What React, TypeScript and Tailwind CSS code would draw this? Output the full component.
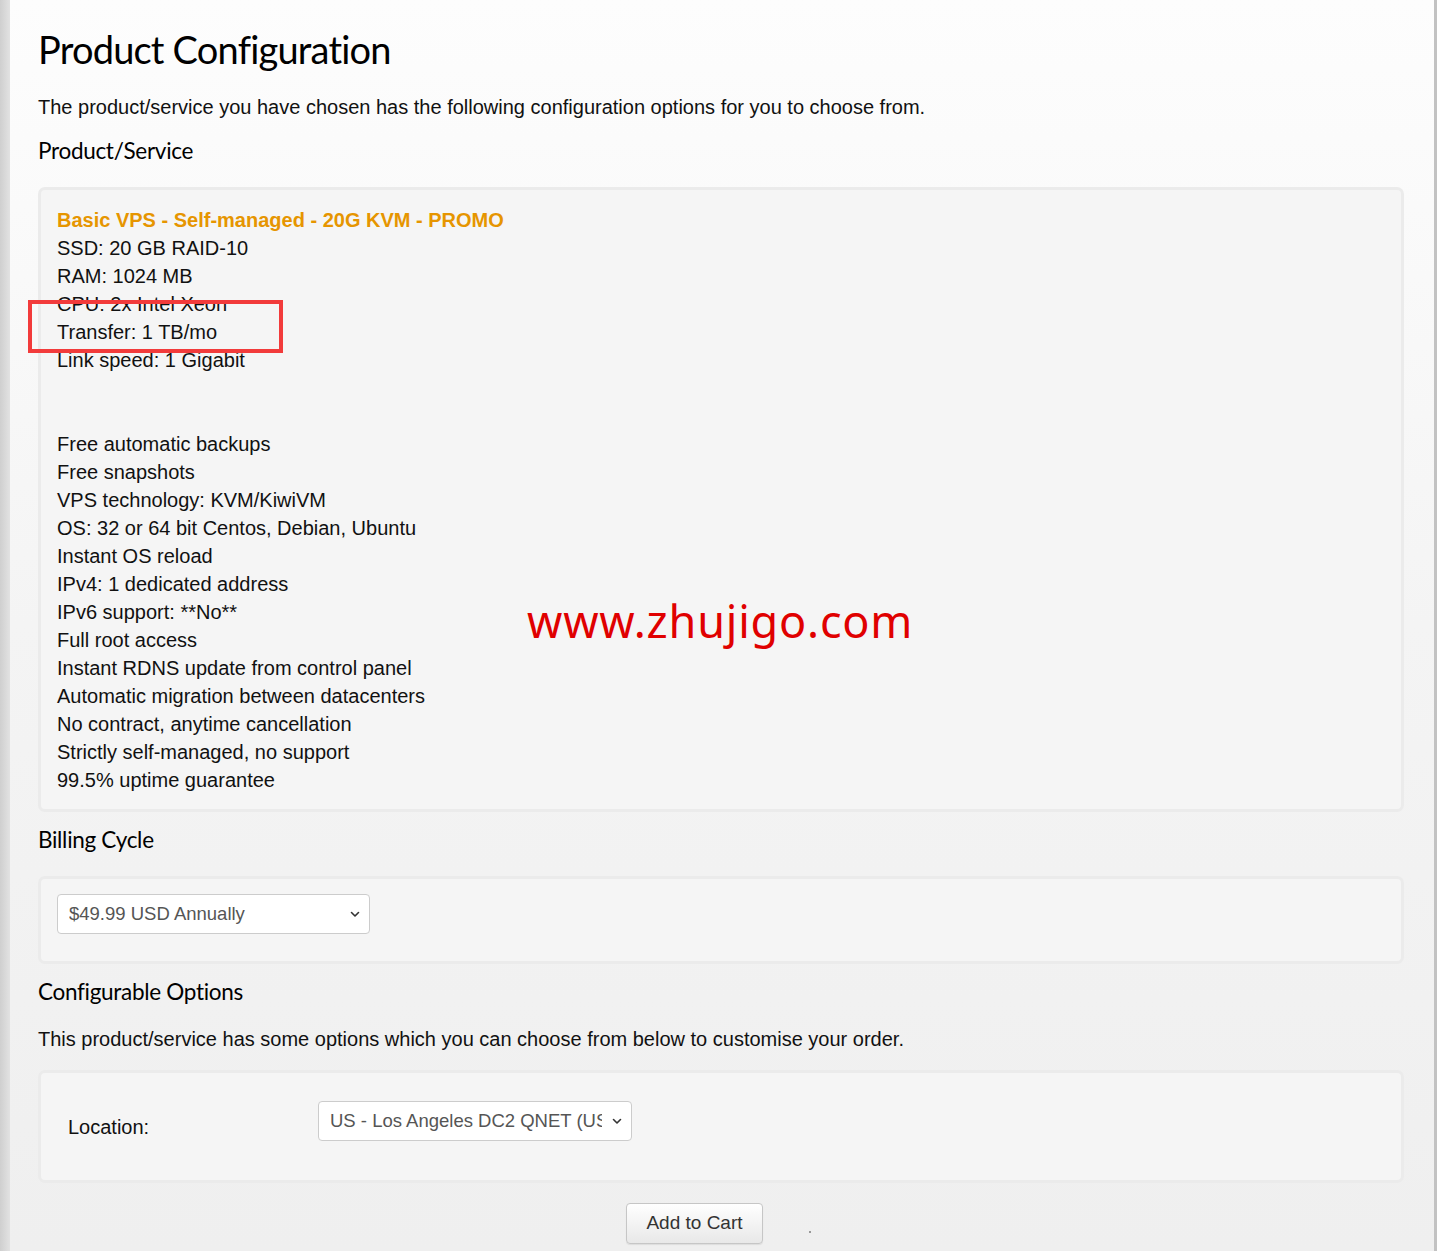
const specs = [
  "SSD: 20 GB RAID-10",
  "RAM: 1024 MB",
  "CPU: 2x Intel Xeon",
  "Transfer: 1 TB/mo",
  "Link speed: 1 Gigabit",
  "",
  "",
  "Free automatic backups",
  "Free snapshots",
  "VPS technology: KVM/KiwiVM",
  "OS: 32 or 64 bit Centos, Debian, Ubuntu",
  "Instant OS reload",
  "IPv4: 1 dedicated address",
  "IPv6 support: **No**",
  "Full root access",
  "Instant RDNS update from control panel",
  "Automatic migration between datacenters",
  "No contract, anytime cancellation",
  "Strictly self-managed, no support",
  "99.5% uptime guarantee",
]

const heading = "font-['Lato',sans-serif] text-[22.5px] tracking-[-0.3px] text-black leading-none"
const body = "font-['Liberation_Sans',Arial,sans-serif]"

function Chevron() {
  return (
    <svg width="12" height="12" viewBox="0 0 12 12" fill="none" className="shrink-0">
      <path d="M2.5 4.5 6 8l3.5-3.5" stroke="#333" strokeWidth="1.6" strokeLinecap="round" strokeLinejoin="round" />
    </svg>
  )
}

function Select({ value, width }: { value: string; width: string }) {
  return (
    <div
      className={`${width} h-[40px] bg-white border border-[#cccccc] rounded-[4px] flex items-center pl-[11px] pr-[8px] gap-[9px] overflow-hidden`}
    >
      <span className={`${body} text-[18.5px] text-[#555555] whitespace-nowrap overflow-hidden flex-1`}>{value}</span>
      <Chevron />
    </div>
  )
}

export default function App() {
  return (
    <div className="min-h-[1251px] flex bg-[#ececec]">
      <div className="w-[10px] shrink-0 bg-gradient-to-r from-[#cfcfcf] to-[#e2e2e2]" />
      <div className="flex-1 bg-gradient-to-b from-[#fdfdfd] via-[#f4f4f4] via-50% to-[#efefef] pl-[28px] pr-[30px] pt-[26px] pb-[6px]">
        <h1 className="font-['Lato',sans-serif] text-[38px] text-black leading-[46px] tracking-[-0.8px]">
          Product Configuration
        </h1>
        <p className={`${body} text-[20px] text-[#111] mt-[21px] leading-[28px]`}>
          The product/service you have chosen has the following configuration options for you to choose from.
        </p>
        <h2 className={`${heading} mt-[19px]`}>Product/Service</h2>

        <div className="relative mt-[24px] border-[3px] border-[#ebebeb] rounded-[7px] bg-[#f5f5f5] px-[16px] pt-[16px] pb-[15px]">
          <div className={`${body} text-[20px] leading-[28px] font-bold text-[#e69500]`}>
            Basic VPS - Self-managed - 20G KVM - PROMO
          </div>
          {specs.map((s, i) => (
            <div key={i} className={`${body} text-[20px] leading-[28px] text-[#111] h-[28px]`}>
              {s}
            </div>
          ))}
          <div className="absolute left-[-13px] top-[110px] w-[255px] h-[53px] border-[4px] border-[#f23b3b]" />
          <div className="absolute left-[486px] top-[408px] font-['Noto_Sans',sans-serif] text-[45px] leading-none text-[#e00000] tracking-[0.8px]">
            www.zhujigo.com
          </div>
        </div>

        <h2 className={`${heading} mt-[17px]`}>Billing Cycle</h2>
        <div className="mt-[25px] border-[3px] border-[#ebebeb] rounded-[7px] bg-[#f5f5f5] px-[16px] pt-[15px] pb-[27px]">
          <Select value="$49.99 USD Annually" width="w-[313px]" />
        </div>

        <h2 className={`${heading} mt-[17px]`}>Configurable Options</h2>
        <p className={`${body} text-[20px] text-[#111] mt-[21px] leading-[28px]`}>
          This product/service has some options which you can choose from below to customise your order.
        </p>

        <div className="mt-[17px] border-[3px] border-[#ebebeb] rounded-[7px] bg-[#f5f5f5] pl-[27px] pt-[26px] pb-[39px] flex items-start">
          <div className={`${body} text-[20px] text-[#111] w-[250px] pt-[14px] leading-[28px]`}>Location:</div>
          <Select value="US - Los Angeles DC2 QNET (USCA_2)" width="w-[314px] mt-[2px]" />
        </div>

        <div className="flex items-center mt-[20px]">
          <button
            className={`${body} ml-[588px] w-[137px] h-[41px] rounded-[4px] border border-[#c6c6c6] bg-gradient-to-b from-white to-[#e8e8e8] text-[19px] text-[#333] shadow-[0_1px_1px_rgba(0,0,0,0.08)]`}
          >
            Add to Cart
          </button>
          <span className="ml-[46px] mt-[18px] w-[2px] h-[2px] bg-[#999]" />
        </div>
      </div>
      <div className="w-[3px] shrink-0 bg-[#c2c2c2]" />
    </div>
  )
}
